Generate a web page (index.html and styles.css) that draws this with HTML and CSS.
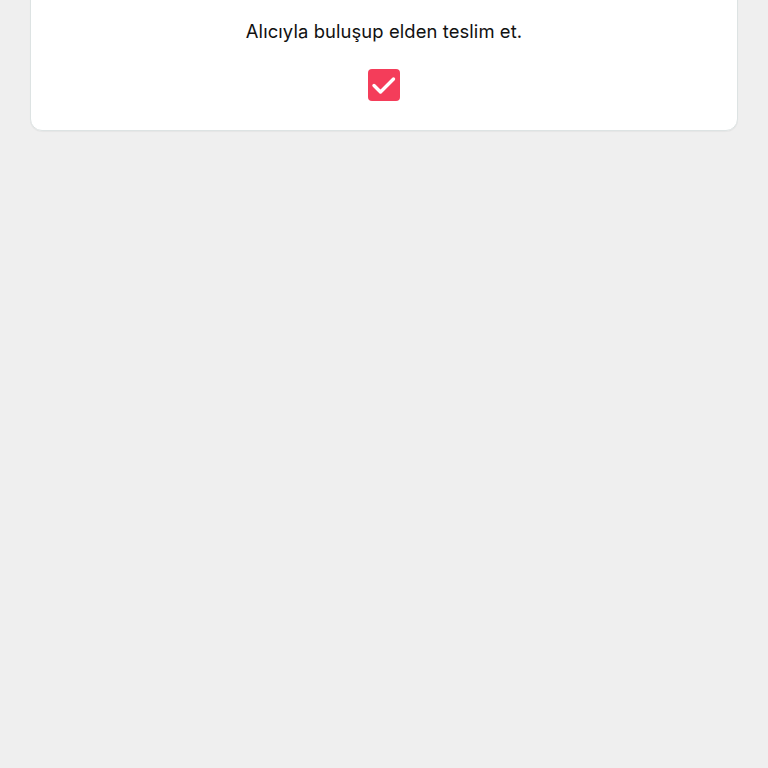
FILE: index.html
```html
<!DOCTYPE html>
<html lang="tr">
<head>
<meta charset="utf-8">
<link rel="stylesheet" href="styles.css">
</head>
<body>
<main class="page">
  <section class="card">
    <p class="label">Alıcıyla buluşup elden teslim et.</p>
    <span class="checkbox" role="checkbox" aria-checked="true">
      <svg viewBox="0 0 32 32" width="32" height="32" aria-hidden="true">
        <rect x="0" y="0" width="32" height="32" rx="4" fill="#f43d5a"/>
        <path d="M6 16.5 L12.5 23 L25.5 10" fill="none" stroke="#fff" stroke-width="3.4" stroke-linecap="round" stroke-linejoin="round"/>
      </svg>
    </span>
  </section>
</main>
</body>
</html>
```
FILE: styles.css
```css
html, body {
  margin: 0;
  padding: 0;
  background: #efefef;
}
body {
  font-family: Inter, "Noto Sans", "Liberation Sans", sans-serif;
  color: #111;
  width: 768px;
  height: 768px;
  overflow: hidden;
}
.page {
  padding: 0 30px;
}
.card {
  margin-top: -20px;
  background: #fff;
  border: 1px solid #dde3e3;
  border-radius: 12px;
  box-shadow: 0 1px 1px rgba(0, 0, 0, 0.04);
  padding: 38px 16px 29px;
  display: flex;
  flex-direction: column;
  align-items: center;
  gap: 26px;
}
.label {
  margin: 0;
  font-size: 18.4px;
  line-height: 24px;
  letter-spacing: 0.1px;
}
.checkbox {
  display: block;
  width: 32px;
  height: 32px;
}
.checkbox svg {
  display: block;
}
```
